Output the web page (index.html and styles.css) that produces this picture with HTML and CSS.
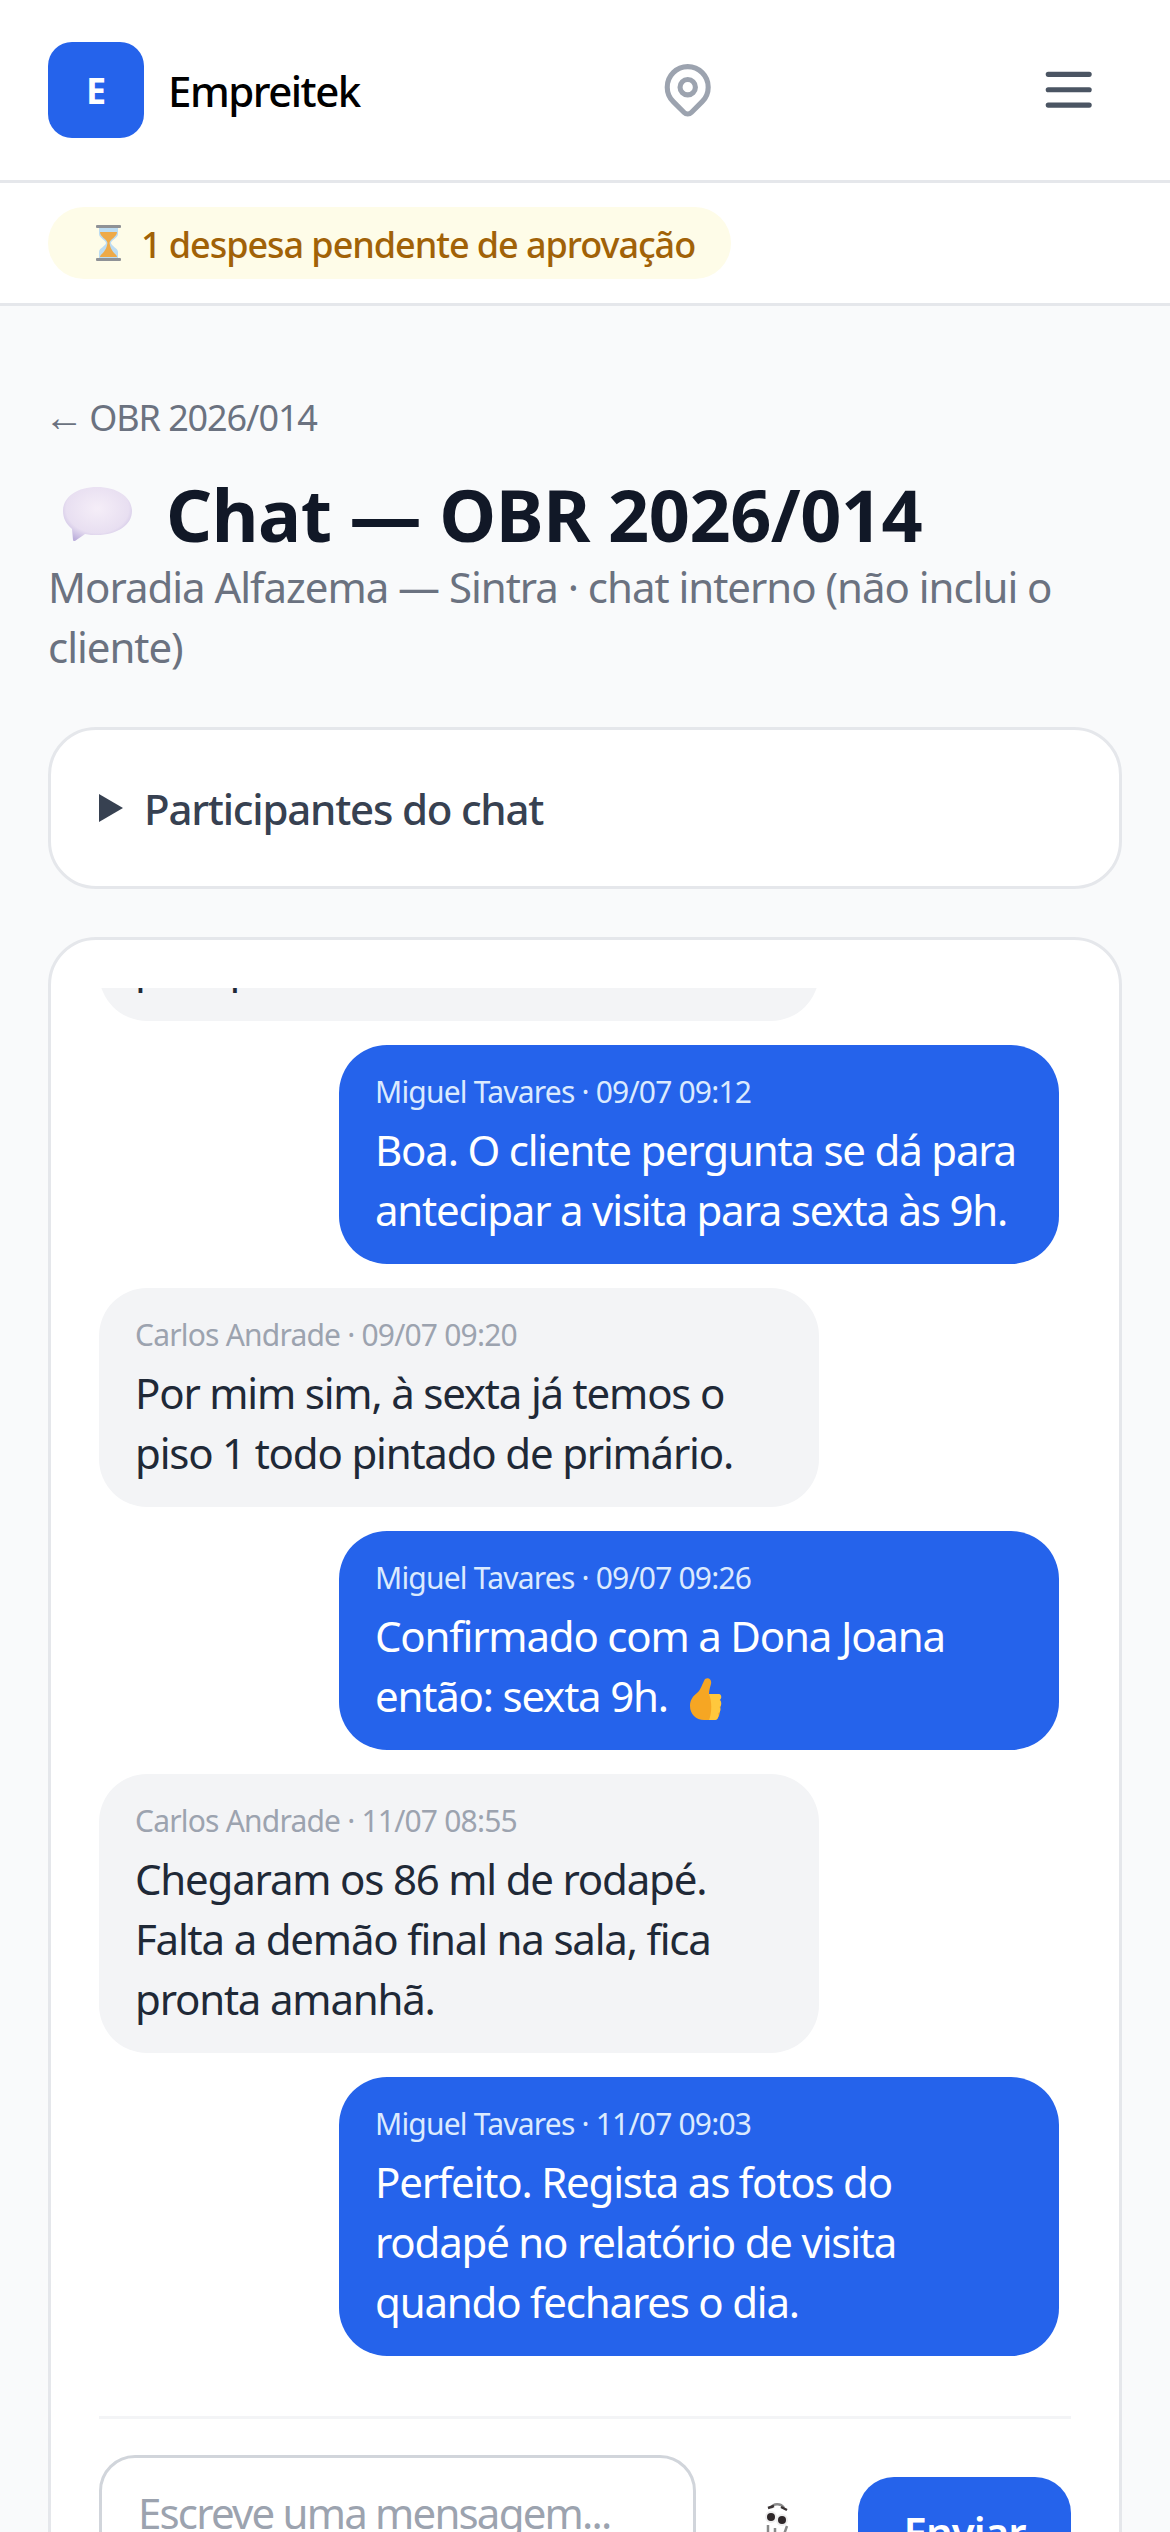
FILE: index.html
```html
<!DOCTYPE html>
<html lang="pt">
<head>
  <meta charset="UTF-8" />
  <title>Chat — OBR 2026/014</title>
  <meta name="viewport" content="width=device-width, initial-scale=1" />
  <link rel="stylesheet" href="styles.css">
</head>
<body>
  <header class="topbar">
    <div class="brand">
      <span class="brand-logo">E</span>
      <span class="brand-name">Empreitek</span>
    </div>
    <svg class="pin" viewBox="0 0 24 24" fill="none" stroke="currentColor" stroke-width="2" stroke-linecap="round" stroke-linejoin="round">
      <path d="M17.657 16.657L13.414 20.9a1.998 1.998 0 01-2.827 0l-4.244-4.243a8 8 0 1111.314 0z"/>
      <path d="M15 11a3 3 0 11-6 0 3 3 0 016 0z"/>
    </svg>
    <svg class="burger" viewBox="0 0 24 24" fill="none" stroke="currentColor" stroke-width="2" stroke-linecap="round">
      <path d="M4 6h16M4 12h16M4 18h16"/>
    </svg>
  </header>

  <div class="notice-bar">
    <span class="notice">
      <svg class="emoji-hourglass" viewBox="0 0 25 36">
        <path d="M3 3h19v6c0 4-7 6-7 9s7 5 7 9v6H3v-6c0-4 7-6 7-9s-7-5-7-9z" fill="#bcdcf2"/>
        <path d="M4 7h17c0 5-7 7-7.500 11h-2C11 14 4 12 4 7z" fill="#eeaa48"/>
        <path d="M4 32c0-3 6-4 7.500-14h2C15 28 21 29 21 32z" fill="#eeaa48"/>
        <rect x="0" y="0" width="25" height="3" rx="1" fill="#8f9296"/>
        <rect x="0" y="33" width="25" height="3" rx="1" fill="#8f9296"/>
      </svg>
      <span>1 despesa pendente de aprovação</span>
    </span>
  </div>

  <main class="page">
    <a class="back-link"><span class="back-arrow">←</span> OBR 2026/014</a>
    <h1 class="page-title">
      <svg class="emoji-balloon" viewBox="0 0 69 54">
        <defs>
          <radialGradient id="balloonFill" cx="50%" cy="40%" r="65%">
            <stop offset="0" stop-color="#f5eef8"/>
            <stop offset="0.7" stop-color="#e8dff1"/>
            <stop offset="1" stop-color="#bdb0dc"/>
          </radialGradient>
        </defs>
        <path d="M34 0c20 0 35 10 35 24S54 48 34 48c-4 0-8 0-12-1-3 2-7 5-10 7-1 0-2 0-2-1l-1-11C3 37 0 31 0 24 0 10 14 0 34 0z" fill="url(#balloonFill)"/>
      </svg>
      <span>Chat — OBR 2026/014</span>
    </h1>
    <p class="page-sub">Moradia Alfazema — Sintra · chat interno (não inclui o cliente)</p>

    <section class="card participants">
      <span class="caret"></span>
      <span class="participants-label">Participantes do chat</span>
    </section>

    <section class="card chat">
      <div class="messages">
        <div class="msg them">
          <div class="msg-meta">Carlos Andrade · 09/07 09:05</div>
          <div class="msg-text">para pintar.</div>
        </div>
        <div class="msg me">
          <div class="msg-meta">Miguel Tavares · 09/07 09:12</div>
          <div class="msg-text">Boa. O cliente pergunta se dá para antecipar a visita para sexta às 9h.</div>
        </div>
        <div class="msg them">
          <div class="msg-meta">Carlos Andrade · 09/07 09:20</div>
          <div class="msg-text">Por mim sim, à sexta já temos o piso 1 todo pintado de primário.</div>
        </div>
        <div class="msg me">
          <div class="msg-meta">Miguel Tavares · 09/07 09:26</div>
          <div class="msg-text">Confirmado com a Dona Joana então: sexta 9h.
            <svg class="emoji-thumb" viewBox="0 0 33 43">
              <path d="M15 1c4-2 7 1 6 5-1 3-2 7-2 10h8c5 0 5 26-2 26H14C6 42 0 36 0 28c0-6 3-10 7-13 4-3 5-9 8-14z" fill="#f6a623"/>
              <path d="M19 16h10c3 0 3 6 0 6 3 0 3 7 0 7 2 0 2 6-1 6 1 0 1 7-3 7h-6c3-8 3-18 0-26z" fill="#ffc83d"/>
            </svg>
          </div>
        </div>
        <div class="msg them">
          <div class="msg-meta">Carlos Andrade · 11/07 08:55</div>
          <div class="msg-text">Chegaram os 86 ml de rodapé. Falta a demão final na sala, fica pronta amanhã.</div>
        </div>
        <div class="msg me">
          <div class="msg-meta">Miguel Tavares · 11/07 09:03</div>
          <div class="msg-text">Perfeito. Regista as fotos do rodapé no relatório de visita quando fechares o dia.</div>
        </div>
      </div>

      <form class="composer">
        <textarea class="composer-input" placeholder="Escreve uma mensagem..." rows="2"></textarea>
        <svg class="attach" viewBox="0 0 30 40">
          <path d="M8 6c2-5 10-5 13 0" fill="none" stroke="#8a8a8a" stroke-width="2.500"/>
          <path d="M5 6l6-2M18 5l6 3" stroke="#3a3334" stroke-width="2.500"/>
          <circle cx="8" cy="15" r="6" fill="#eee"/>
          <circle cx="19" cy="18" r="6" fill="#eee"/>
          <circle cx="8" cy="15" r="4" fill="#2e2729"/>
          <circle cx="19" cy="18" r="4" fill="#2e2729"/>
          <path d="M5 23v15M12 26v12M24 24l-5 14" stroke="#888" stroke-width="2.500" fill="none"/>
        </svg>
        <button class="send-btn" type="button">Enviar</button>
      </form>
    </section>
  </main>
</body>
</html>
```

FILE: styles.css
```css
:root{
  --blue:#2563eb;
  --line:#e5e7eb;
  --muted:#6b7280;
}
*{box-sizing:border-box;}
html,body{height:2532px;overflow:hidden;}
body{
  margin:0;background:#f9fafb;color:#111827;
  font-family:"Noto Sans","Open Sans",sans-serif;
}

/* top bar */
.topbar{
  height:183px;padding:0 48px;background:#fff;border-bottom:3px solid var(--line);
  display:flex;align-items:center;
}
.brand{display:flex;align-items:center;gap:24px;width:609px;}
.brand-logo{
  width:96px;height:96px;border-radius:24px;background:var(--blue);color:#fff;
  display:flex;align-items:center;justify-content:center;font-size:36px;font-weight:700;
}
.brand-name{font-size:42px;font-weight:500;color:#000;letter-spacing:-1.500px;}
.pin{width:61.440px;height:61.440px;color:#9ca3af;}
.burger{width:61.440px;height:61.440px;color:#4b5563;margin:0 23px 0 auto;}

/* pending notice */
.notice-bar{
  height:123px;padding:24px 48px 0;background:#fff;border-bottom:3px solid var(--line);
}
.notice{
  display:inline-flex;align-items:center;gap:20px;height:72px;padding:2px 36px 0 48px;border-radius:36px;
  background:#fefce8;color:#a16207;font-size:36px;font-weight:500;letter-spacing:-1.050px;
}
.emoji-hourglass{width:25px;height:36px;margin-top:-2px;}

/* page head */
.page{padding:88px 48px 0;}
.back-link{display:block;font-size:36px;line-height:48px;color:var(--muted);letter-spacing:-1.100px;}
.back-arrow{font-size:40px;line-height:0;letter-spacing:-3px;margin-left:-4px;}
.page-title{
  display:flex;align-items:center;gap:34px;margin:30px 0 0;padding-left:15px;
  font-size:72px;line-height:84px;font-weight:700;letter-spacing:-.5px;
}
.emoji-balloon{width:69px;height:54px;}
.page-sub{margin:1px 0 0;font-size:42px;line-height:60px;color:var(--muted);letter-spacing:-1.030px;}

.card{background:#fff;border:3px solid var(--line);border-radius:48px;}
.participants{
  display:flex;align-items:center;gap:21px;height:162px;margin-top:50px;padding:0 48px;
}
.caret{
  width:0;height:0;border-left:24px solid #374151;
  border-top:14px solid transparent;border-bottom:14px solid transparent;
}
.participants-label{font-size:42px;font-weight:500;color:#374151;letter-spacing:-1.200px;}

/* chat */
.chat{margin-top:48px;height:1700px;padding:48px 48px 0;}
.messages{
  height:1368px;overflow:hidden;display:flex;flex-direction:column;justify-content:flex-end;gap:24px;
  padding-right:12px;
}
.msg{flex:none;width:720px;padding:24px 36px;border-radius:48px;}
.msg.them{background:#f3f4f6;color:#1f2937;}
.msg.me{align-self:flex-end;background:var(--blue);color:#fff;}
.msg-meta{font-size:30px;line-height:45px;letter-spacing:-.8px;color:#9ca3af;margin-bottom:6px;}
.msg.me .msg-meta{color:#dbeafe;}
.msg-text{font-size:42px;line-height:60px;letter-spacing:-1.200px;}
.emoji-thumb{width:33px;height:43px;vertical-align:-9px;margin-left:12px;}

.composer{
  display:flex;align-items:flex-start;margin-top:60px;padding-top:36px;border-top:3px solid #f3f4f6;
}
.composer-input{
  width:597px;height:162px;padding:25px 36px;border:3px solid #d1d5db;border-radius:36px;resize:none;outline:none;
  font-family:inherit;font-size:42px;line-height:60px;letter-spacing:-1.200px;color:#111827;background:#fff;
}
.composer-input::placeholder{color:#9ca3af;letter-spacing:-1.800px;}
.attach{width:30px;height:40px;margin:47px 0 0 67px;}
.send-btn{
  width:213px;height:108px;margin:22px 0 0 auto;border:none;border-radius:36px;background:var(--blue);color:#fff;
  font-family:inherit;font-size:42px;font-weight:600;letter-spacing:-1px;
}
```
